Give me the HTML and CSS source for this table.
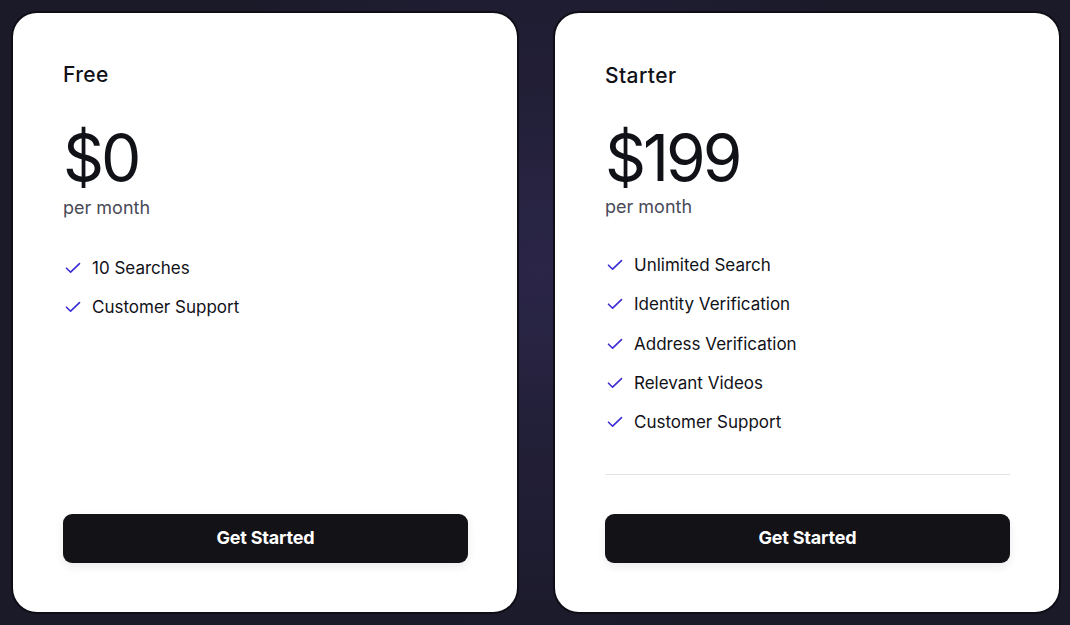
FILE: index.html
```html
<!DOCTYPE html>
<html lang="en">
<head>
<meta charset="utf-8">
<title>Pricing</title>
<link rel="stylesheet" href="styles.css">
</head>
<body>
<main class="plans">
  <section class="card">
    <h2 class="plan-name">Free</h2>
    <div class="price">$0</div>
    <div class="period">per month</div>
    <ul class="features">
      <li><svg class="check" viewBox="0 0 16 12"><path d="M1.5 6.2 L5.6 10.2 L14.5 1.6"/></svg>10 Searches</li>
      <li><svg class="check" viewBox="0 0 16 12"><path d="M1.5 6.2 L5.6 10.2 L14.5 1.6"/></svg>Customer Support</li>
    </ul>
    <div class="footer">
      <button class="cta">Get Started</button>
    </div>
  </section>
  <section class="card card-featured">
    <h2 class="plan-name">Starter</h2>
    <div class="price">$199</div>
    <div class="period">per month</div>
    <ul class="features">
      <li><svg class="check" viewBox="0 0 16 12"><path d="M1.5 6.2 L5.6 10.2 L14.5 1.6"/></svg>Unlimited Search</li>
      <li><svg class="check" viewBox="0 0 16 12"><path d="M1.5 6.2 L5.6 10.2 L14.5 1.6"/></svg>Identity Verification</li>
      <li><svg class="check" viewBox="0 0 16 12"><path d="M1.5 6.2 L5.6 10.2 L14.5 1.6"/></svg>Address Verification</li>
      <li><svg class="check" viewBox="0 0 16 12"><path d="M1.5 6.2 L5.6 10.2 L14.5 1.6"/></svg>Relevant Videos</li>
      <li><svg class="check" viewBox="0 0 16 12"><path d="M1.5 6.2 L5.6 10.2 L14.5 1.6"/></svg>Customer Support</li>
    </ul>
    <div class="footer">
      <hr class="divider">
      <button class="cta">Get Started</button>
    </div>
  </section>
</main>
</body>
</html>
```
FILE: styles.css
```css
* { box-sizing: border-box; }
html, body { height: 100%; }
body {
  margin: 0;
  font-family: Inter, "DejaVu Sans", sans-serif;
  color: #111118;
  background: radial-gradient(ellipse 420px 380px at 540px 270px, #2b2648 0%, #221f38 45%, #1b1a29 100%);
  background-color: #1b1a29;
  overflow: hidden;
}
.plans {
  display: grid;
  grid-template-columns: 504px 504px;
  gap: 38px;
  padding: 13px 11px 13px 13px;
  height: 625px;
}
.card {
  background: #fff;
  border-radius: 24px;
  box-shadow: 0 0 0 2px #0f0e17;
  padding: 48px 49px 49px 50px;
  display: flex;
  flex-direction: column;
  height: 599px;
}
.plan-name {
  margin: 0;
  font-size: 21px;
  line-height: 28px;
  font-weight: 500;
  letter-spacing: 0.4px;
}
.card-featured .plan-name { margin-top: 1px; margin-bottom: -1px; }
.price {
  margin-top: 37px;
  font-size: 64px;
  line-height: 64px;
  font-weight: 400;
  letter-spacing: -3px;
}
.period {
  margin-top: 6px;
  font-size: 18px;
  line-height: 24px;
  color: #4a4a58;
  letter-spacing: 0;
}
.card-featured .period { margin-top: 5px; }
.features {
  list-style: none;
  margin: 36px 0 0;
  padding: 0;
  display: flex;
  flex-direction: column;
  gap: 15.3px;
}
.card-featured .features { margin-top: 34px; }
.features li {
  display: flex;
  align-items: center;
  font-size: 17px;
  line-height: 24px;
  letter-spacing: 0;
}
.check {
  width: 16px;
  height: 12px;
  margin-left: 2px;
  margin-right: 11px;
  fill: none;
  stroke: #3a2bd4;
  stroke-width: 1.6;
  stroke-linecap: round;
  stroke-linejoin: round;
}
.footer {
  margin-top: auto;
  display: flex;
  flex-direction: column;
}
.divider {
  border: 0;
  border-top: 1px solid #e3e3e6;
  margin: 0 0 39px;
}
.cta {
  height: 49px;
  width: 100%;
  border: 0;
  border-radius: 9px;
  background: #131217;
  color: #fff;
  font-family: inherit;
  font-size: 18px;
  font-weight: 700;
  letter-spacing: -0.2px;
  padding: 0 0 2px;
  box-shadow: 0 4px 10px rgba(0,0,0,0.08);
  cursor: pointer;
}
```
